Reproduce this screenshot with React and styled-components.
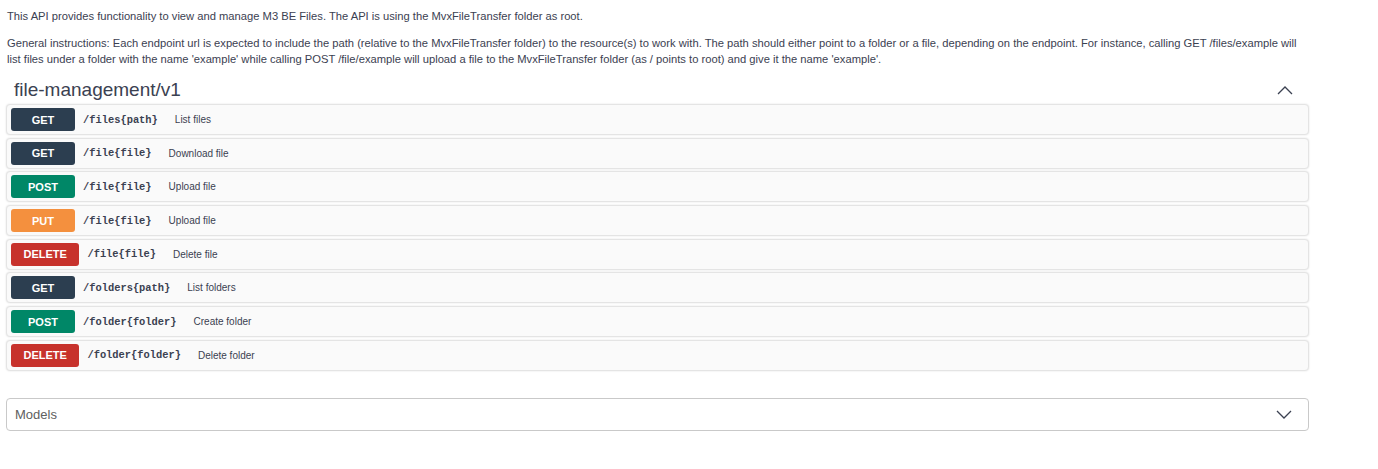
import React from "react";
import styled, { createGlobalStyle } from "styled-components";

const Global = createGlobalStyle`
  html, body { margin: 0; padding: 0; background: #fff; }
  body { font-family: "Liberation Sans", Arial, sans-serif; color: #3b4151; }
`;

const Page = styled.div`
  width: 1303px;
  margin-left: 6px;
  padding-top: 8px;
  padding-bottom: 37px;
`;

const Para = styled.p`
  margin: 0 0 11px 1px;
  font-size: 11.2px;
  line-height: 16px;
  color: #3b4151;
`;

const TagHeader = styled.div`
  display: flex;
  align-items: center;
  justify-content: space-between;
  height: 24px;
  padding: 0 16px 0 8px;
  margin-bottom: 2px;
`;

const TagTitle = styled.h3`
  margin: 0;
  font-size: 19px;
  font-weight: 400;
  color: #3b4151;
  line-height: 24px;
`;

const Ops = styled.div`
  display: flex;
  flex-direction: column;
  gap: 2.7px;
`;

const Row = styled.div`
  box-sizing: border-box;
  height: 31px;
  display: flex;
  align-items: center;
  padding: 0 4px;
  background: #fafafa;
  border: 1px solid #e4e4e4;
  border-radius: 4px;
  box-shadow: 0 0 2px rgba(0, 0, 0, 0.12);
`;

const colors = {
  GET: "#2c3e50",
  POST: "#008767",
  PUT: "#f4903e",
  DELETE: "#c7322c",
};

const Badge = styled.span`
  box-sizing: border-box;
  min-width: 64px;
  height: 23px;
  padding: 0 12.5px;
  border-radius: 3px;
  background: ${(p) => colors[p.$m]};
  color: #fff;
  font-size: 11px;
  font-weight: 700;
  display: inline-flex;
  align-items: center;
  justify-content: center;
`;

const Path = styled.span`
  margin-left: 8px;
  font-family: "Liberation Mono", "DejaVu Sans Mono", monospace;
  font-weight: 700;
  font-size: 10.4px;
  color: #3b4151;
`;

const Desc = styled.span`
  margin-left: 17px;
  font-size: 10px;
  color: #3b4151;
`;

const Models = styled.div`
  box-sizing: border-box;
  margin-top: 27px;
  height: 33px;
  border: 1px solid #c9c9c9;
  border-radius: 4px;
  display: flex;
  align-items: center;
  justify-content: space-between;
  padding: 0 16px 0 8px;
`;

const ModelsLabel = styled.span`
  font-size: 13px;
  color: #606060;
`;

const Chevron = ({ up }) => (
  <svg width="16" height="9" viewBox="0 0 16 9" fill="none">
    <path
      d={up ? "M1 8 L8 1 L15 8" : "M1 1 L8 8 L15 1"}
      stroke="#3b4151"
      strokeWidth="1.3"
    />
  </svg>
);

const ops = [
  ["GET", "/files{path}", "List files"],
  ["GET", "/file{file}", "Download file"],
  ["POST", "/file{file}", "Upload file"],
  ["PUT", "/file{file}", "Upload file"],
  ["DELETE", "/file{file}", "Delete file"],
  ["GET", "/folders{path}", "List folders"],
  ["POST", "/folder{folder}", "Create folder"],
  ["DELETE", "/folder{folder}", "Delete folder"],
];

export default function App() {
  return (
    <>
      <Global />
      <Page>
        <Para>
          This API provides functionality to view and manage M3 BE Files. The API is using the MvxFileTransfer folder as root.
        </Para>
        <Para>
          General instructions: Each endpoint url is expected to include the path (relative to the MvxFileTransfer folder) to the resource(s) to work with. The path should either point to a folder or a file, depending on the endpoint. For instance, calling GET /files/example will list files under a folder with the name 'example' while calling POST /file/example will upload a file to the MvxFileTransfer folder (as / points to root) and give it the name 'example'.
        </Para>
        <TagHeader>
          <TagTitle>file-management/v1</TagTitle>
          <Chevron up />
        </TagHeader>
        <Ops>
          {ops.map(([m, p, d], i) => (
            <Row key={i}>
              <Badge $m={m}>{m}</Badge>
              <Path>{p}</Path>
              <Desc>{d}</Desc>
            </Row>
          ))}
        </Ops>
        <Models>
          <ModelsLabel>Models</ModelsLabel>
          <Chevron />
        </Models>
      </Page>
    </>
  );
}
